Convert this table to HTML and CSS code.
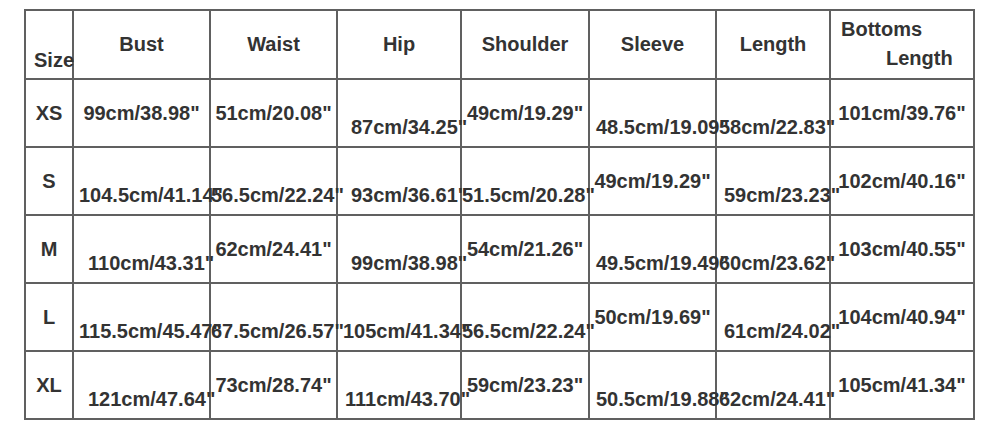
FILE: index.html
```html
<!DOCTYPE html>
<html>
<head>
<meta charset="utf-8">
<link rel="stylesheet" href="styles.css">
</head>
<body>
<div class="chart">
  <div class="cell size-head">Size</div>
  <div class="cell hi">Bust</div>
  <div class="cell hi">Waist</div>
  <div class="cell hi">Hip</div>
  <div class="cell hi">Shoulder</div>
  <div class="cell hi">Sleeve</div>
  <div class="cell hi">Length</div>
  <div class="cell two"><span class="l1">Bottoms</span><span class="l2">Length</span></div>

  <div class="cell hi">XS</div>
  <div class="cell hi">99cm/38.98"</div>
  <div class="cell hi">51cm/20.08"</div>
  <div class="cell lo p13">87cm/34.25"</div>
  <div class="cell hi">49cm/19.29"</div>
  <div class="cell lo p6">48.5cm/19.09"</div>
  <div class="cell lo p2">58cm/22.83"</div>
  <div class="cell hi">101cm/39.76"</div>

  <div class="cell hi">S</div>
  <div class="cell lo p5">104.5cm/41.14"</div>
  <div class="cell lo p0">56.5cm/22.24"</div>
  <div class="cell lo p13">93cm/36.61"</div>
  <div class="cell lo p0">51.5cm/20.28"</div>
  <div class="cell hi">49cm/19.29"</div>
  <div class="cell lo p7">59cm/23.23"</div>
  <div class="cell hi">102cm/40.16"</div>

  <div class="cell hi">M</div>
  <div class="cell lo p14">110cm/43.31"</div>
  <div class="cell hi">62cm/24.41"</div>
  <div class="cell lo p13">99cm/38.98"</div>
  <div class="cell hi">54cm/21.26"</div>
  <div class="cell lo p6">49.5cm/19.49"</div>
  <div class="cell lo p2">60cm/23.62"</div>
  <div class="cell hi">103cm/40.55"</div>

  <div class="cell hi">L</div>
  <div class="cell lo p5">115.5cm/45.47"</div>
  <div class="cell lo p0">67.5cm/26.57"</div>
  <div class="cell lo p5">105cm/41.34"</div>
  <div class="cell lo p0">56.5cm/22.24"</div>
  <div class="cell hi">50cm/19.69"</div>
  <div class="cell lo p7">61cm/24.02"</div>
  <div class="cell hi">104cm/40.94"</div>

  <div class="cell hi">XL</div>
  <div class="cell lo p14">121cm/47.64"</div>
  <div class="cell hi">73cm/28.74"</div>
  <div class="cell lo p7">111cm/43.70"</div>
  <div class="cell hi">59cm/23.23"</div>
  <div class="cell lo p6">50.5cm/19.88"</div>
  <div class="cell lo p2">62cm/24.41"</div>
  <div class="cell hi">105cm/41.34"</div>
</div>
</body>
</html>
```

FILE: styles.css
```css
html, body {
  margin: 0;
  padding: 0;
  background: #ffffff;
}

body {
  padding: 9px 0 0 24px;
  font-family: "Liberation Sans", Arial, sans-serif;
  font-weight: bold;
  font-size: 20px;
  color: #333333;
}

.chart {
  display: grid;
  grid-template-columns: 48px 137px 127px 124px 128px 127px 114px 144px;
  grid-template-rows: 69px repeat(5, 68px);
  width: max-content;
  border-top: 2px solid #606060;
  border-left: 2px solid #606060;
}

.cell {
  box-sizing: border-box;
  border-right: 2px solid #606060;
  border-bottom: 2px solid #606060;
  display: flex;
  white-space: nowrap;
  line-height: 24px;
  min-width: 0;
}

.hi {
  justify-content: center;
  padding-top: 21px;
}

.lo {
  justify-content: flex-start;
  padding-top: 35px;
}

.size-head {
  padding: 37px 0 0 8px;
}

.two {
  flex-direction: column;
  padding-top: 4px;
  line-height: 29px;
}

.l1 {
  padding-left: 10px;
}

.l2 {
  padding-left: 55px;
}

.p0 { padding-left: 0; }
.p2 { padding-left: 2px; }
.p5 { padding-left: 5px; }
.p6 { padding-left: 6px; }
.p7 { padding-left: 7px; }
.p13 { padding-left: 13px; }
.p14 { padding-left: 14px; }
```
